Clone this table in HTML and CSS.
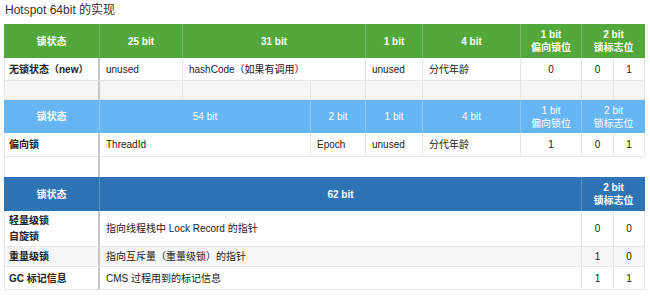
FILE: index.html
```html
<!DOCTYPE html>
<html lang="zh">
<head>
<meta charset="utf-8">
<title>Hotspot 64bit 的实现</title>
<link rel="stylesheet" href="styles.css">
</head>
<body>
<h1 class="title">Hotspot 64bit 的实现</h1>
<div class="grid">
  <!-- green header -->
  <div class="c hd green">锁状态</div>
  <div class="c hd green">25 bit</div>
  <div class="c hd green s2">31 bit</div>
  <div class="c hd green">1 bit</div>
  <div class="c hd green">4 bit</div>
  <div class="c hd green two">1 bit<br>偏向锁位</div>
  <div class="c hd green s2 two last">2 bit<br>锁标志位</div>

  <div class="c a">无锁状态（new）</div>
  <div class="c">unused</div>
  <div class="c s2">hashCode（如果有调用）</div>
  <div class="c">unused</div>
  <div class="c">分代年龄</div>
  <div class="c n">0</div>
  <div class="c n">0</div>
  <div class="c n last">1</div>

  <div class="c a gray"></div>
  <div class="c gray"></div>
  <div class="c gray"></div>
  <div class="c gray"></div>
  <div class="c gray"></div>
  <div class="c gray"></div>
  <div class="c gray"></div>
  <div class="c gray"></div>
  <div class="c gray last"></div>

  <!-- light blue header -->
  <div class="c hd light">锁状态</div>
  <div class="c hd light s2 thin">54 bit</div>
  <div class="c hd light thin">2 bit</div>
  <div class="c hd light thin">1 bit</div>
  <div class="c hd light thin">4 bit</div>
  <div class="c hd light two thin">1 bit<br>偏向锁位</div>
  <div class="c hd light s2 two thin last">2 bit<br>锁标志位</div>

  <div class="c a">偏向锁</div>
  <div class="c s2">ThreadId</div>
  <div class="c">Epoch</div>
  <div class="c">unused</div>
  <div class="c">分代年龄</div>
  <div class="c n">1</div>
  <div class="c n">0</div>
  <div class="c n last">1</div>

  <div class="c a plain"></div>
  <div class="c s8 plain last"></div>

  <!-- dark blue header -->
  <div class="c hd dark">锁状态</div>
  <div class="c hd dark s6">62 bit</div>
  <div class="c hd dark s2 two last">2 bit<br>锁标志位</div>

  <div class="c a two16">轻量级锁<br>自旋锁</div>
  <div class="c s6">指向线程栈中 Lock Record 的指针</div>
  <div class="c n">0</div>
  <div class="c n last">0</div>

  <div class="c a gray">重量级锁</div>
  <div class="c s6 gray">指向互斥量（重量级锁）的指针</div>
  <div class="c n gray">1</div>
  <div class="c n gray last">0</div>

  <div class="c a">GC 标记信息</div>
  <div class="c s6">CMS 过程用到的标记信息</div>
  <div class="c n">1</div>
  <div class="c n last">1</div>
</div>
</body>
</html>
```

FILE: styles.css
```css
html, body {
  margin: 0;
  padding: 0;
  background: #ffffff;
}

body {
  padding: 0 5px 0 4px;
  font-family: "Liberation Sans", "Noto Sans CJK SC", sans-serif;
  color: #222;
}

.title {
  margin: 0;
  padding: 0 0 4px 1px;
  height: 20px;
  font-size: 12px;
  line-height: 20px;
  font-weight: normal;
  color: #333;
}

.grid {
  display: grid;
  grid-template-columns: 96px 83px 128px 55px 57px 98px 61px 32px 31px;
  grid-template-rows: 34px 23px 19px 33px 24px 20px 34px 36px 20px 23px;
  font-size: 10px;
}

.c {
  box-sizing: border-box;
  display: flex;
  align-items: center;
  padding: 0 4px 0 6px;
  border-right: 1px solid #e6e6e6;
  border-bottom: 1px solid #e6e6e6;
  line-height: 13px;
  white-space: nowrap;
  overflow: hidden;
}

.s2 { grid-column: span 2; }
.s6 { grid-column: span 6; }
.s8 { grid-column: span 8; }

.a {
  padding-left: 4px;
  font-weight: bold;
  color: #222;
  border-left: 1px solid #e6e6e6;
  border-right: 2px solid #c8c8c8;
}

.n {
  justify-content: center;
  padding: 0;
}

.gray {
  background: #f6f6f6;
}

.plain {
  border-bottom: 0;
}

.plain.s8 {
  border-right: 0;
}

.two16 {
  line-height: 16px;
}

.hd {
  justify-content: center;
  text-align: center;
  padding: 0;
  color: #ffffff;
  font-weight: bold;
  border-right: 1px solid rgba(255, 255, 255, 0.22);
  border-bottom: 0;
}

.hd.last {
  border-right: 0;
}

.green {
  background: #52a83b;
}

.light {
  background: #66b6f4;
}

.light.thin {
  font-weight: normal;
}

.dark {
  background: #2e74b5;
}
```
